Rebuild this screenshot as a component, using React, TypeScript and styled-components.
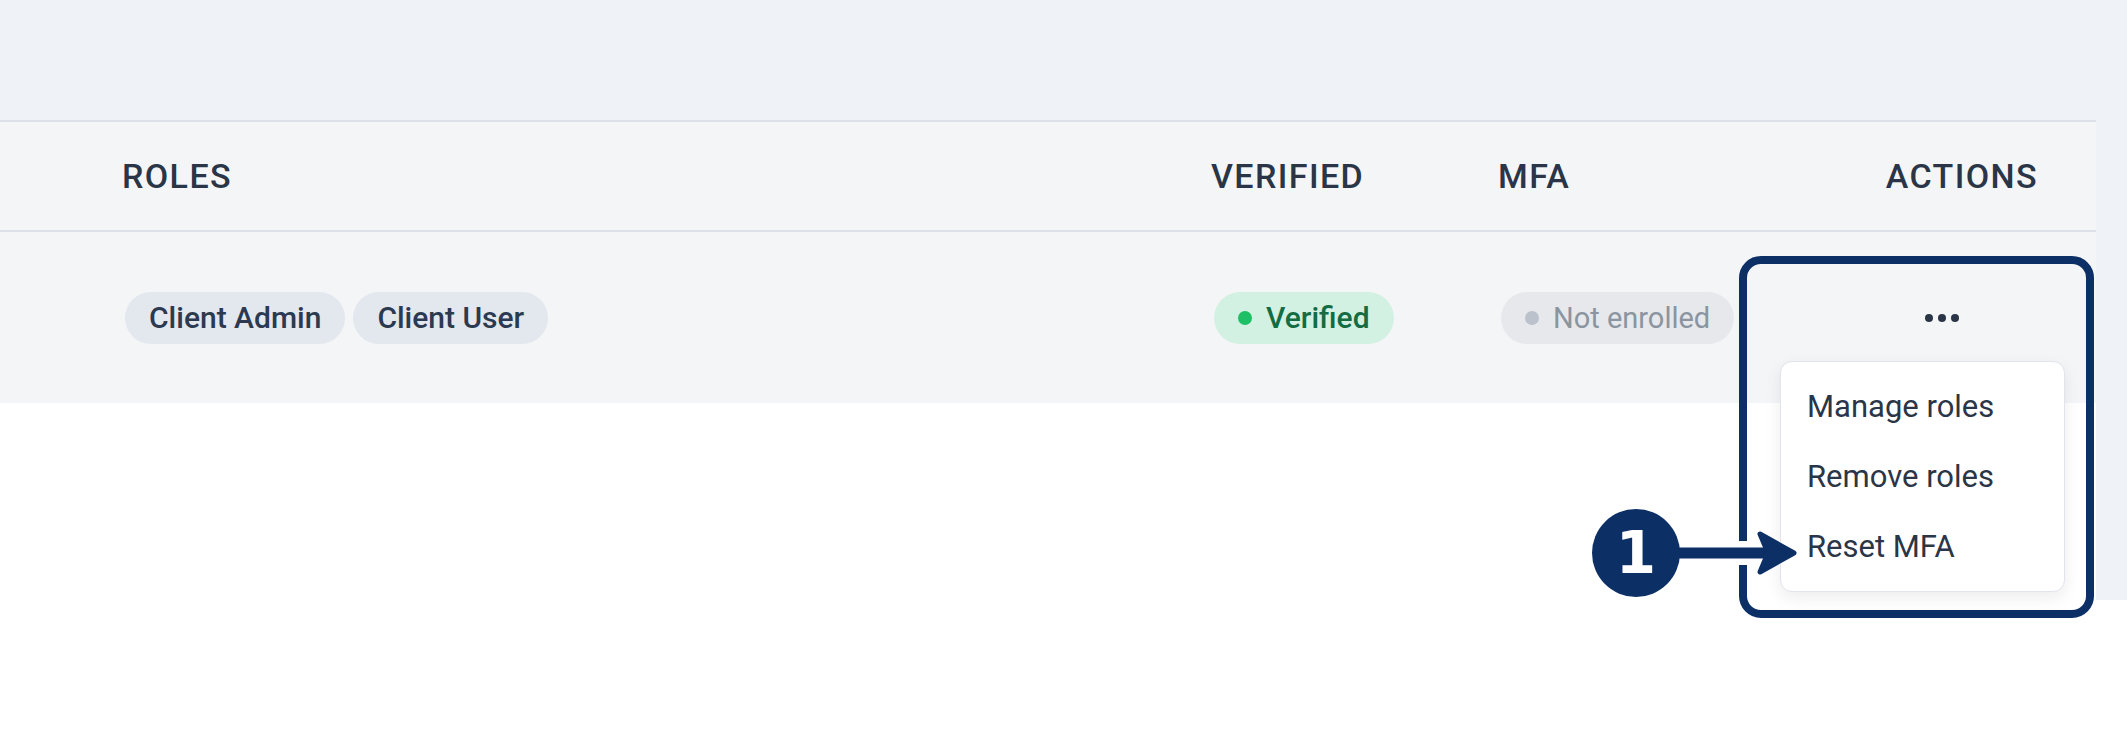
import styled, { createGlobalStyle } from 'styled-components';

const GlobalStyle = createGlobalStyle`
  html, body {
    margin: 0;
    padding: 0;
    background: #ffffff;
  }
  body {
    font-family: Roboto, "Noto Sans", "Liberation Sans", sans-serif;
    color: #2a3547;
  }
  * {
    box-sizing: border-box;
  }
`;

const NAVY = '#0c2f66';

const Page = styled.div`
  position: relative;
  width: 2127px;
  height: 739px;
  overflow: hidden;
  display: flex;
  align-items: flex-start;
  background: #ffffff;
`;

const MainColumn = styled.div`
  width: 2096px;
  display: flex;
  flex-direction: column;
`;

const TopBand = styled.div`
  height: 120px;
  background: #eff2f6;
`;

const SideStrip = styled.div`
  flex: 1;
  height: 600px;
  background: #eff2f6;
`;

const Table = styled.div`
  border-top: 2px solid #dde1e7;
  background: #ffffff;
`;

const Row = styled.div<{ $height: number; $divider?: boolean }>`
  display: grid;
  grid-template-columns: 1089px 287px 242px 356px;
  align-items: center;
  padding-left: 122px;
  height: ${(p) => p.$height}px;
  background: #f4f5f7;
  border-bottom: ${(p) => (p.$divider ? '2px solid #dde1e7' : 'none')};
`;

const HeadCell = styled.div<{ $right?: boolean }>`
  font-size: 34px;
  font-weight: 500;
  letter-spacing: 1.4px;
  color: #2a3547;
  text-transform: uppercase;
  text-align: ${(p) => (p.$right ? 'right' : 'left')};
  padding-right: ${(p) => (p.$right ? '58px' : '0')};
`;

const Cell = styled.div`
  display: flex;
  align-items: center;
  gap: 8px;
  padding-left: 3px;
`;

const ActionCell = styled.div`
  display: flex;
  justify-content: flex-end;
  padding-right: 129px;
`;

const Pill = styled.span<{ $tone: 'role' | 'success' | 'muted' }>`
  display: inline-flex;
  align-items: center;
  gap: 14px;
  height: 52px;
  padding: 0 24px;
  border-radius: 26px;
  font-size: ${(p) => (p.$tone === 'muted' ? '29px' : '30px')};
  font-weight: ${(p) => (p.$tone === 'muted' ? 400 : 500)};
  white-space: nowrap;
  background: ${(p) =>
    p.$tone === 'success' ? '#d3f1e2' : p.$tone === 'muted' ? '#e6e8ec' : '#e3e7ee'};
  color: ${(p) =>
    p.$tone === 'success' ? '#146c43' : p.$tone === 'muted' ? '#8b94a1' : '#2b3a50'};
`;

const StatusDot = styled.span<{ $color: string }>`
  width: 14px;
  height: 14px;
  border-radius: 50%;
  background: ${(p) => p.$color};
`;

const DotsButton = styled.button`
  display: flex;
  gap: 5px;
  padding: 8px;
  border: none;
  background: transparent;
  cursor: pointer;
`;

const Dot = styled.span`
  width: 8px;
  height: 8px;
  border-radius: 50%;
  background: #2a3547;
`;

const Highlight = styled.div`
  position: absolute;
  left: 1739px;
  top: 256px;
  width: 355px;
  height: 362px;
  border: 8px solid ${NAVY};
  border-radius: 22px;
  pointer-events: none;
`;

const Menu = styled.ul`
  position: absolute;
  left: 1780px;
  top: 361px;
  width: 285px;
  height: 231px;
  margin: 0;
  padding: 10px 0;
  list-style: none;
  background: #ffffff;
  border: 1.5px solid #e1e4ea;
  border-radius: 12px;
  box-shadow: 0 6px 16px rgba(20, 30, 50, 0.08);
`;

const MenuItem = styled.li`
  height: 70px;
  line-height: 70px;
  padding-left: 26px;
  font-size: 31px;
  color: #2a3547;
  white-space: nowrap;
`;

const Badge = styled.div`
  position: absolute;
  left: 1592px;
  top: 509px;
  width: 88px;
  height: 88px;
  border-radius: 50%;
  background: ${NAVY};
  display: flex;
  align-items: center;
  justify-content: center;
  color: #ffffff;
  font-family: "DejaVu Sans", sans-serif;
  font-weight: 700;
  font-size: 58px;
  line-height: 1;
`;

const Arrow = styled.svg`
  position: absolute;
  left: 1676px;
  top: 526px;
`;

function StepArrow() {
  return (
    <Arrow width="126" height="54" viewBox="0 0 126 54">
      <line x1="24" y1="27" x2="86" y2="27" stroke="#ffffff" strokeWidth="24" />
      <line x1="2" y1="27" x2="92" y2="27" stroke={NAVY} strokeWidth="11" />
      <path
        d="M84 8 L118 27 L84 46 L92 27 Z"
        fill={NAVY}
        stroke={NAVY}
        strokeWidth="5"
        strokeLinejoin="round"
      />
    </Arrow>
  );
}

export default function App() {
  return (
    <>
      <GlobalStyle />
      <Page>
        <MainColumn>
          <TopBand />
          <Table>
            <Row $height={110} $divider>
              <HeadCell>Roles</HeadCell>
              <HeadCell>Verified</HeadCell>
              <HeadCell>MFA</HeadCell>
              <HeadCell $right>Actions</HeadCell>
            </Row>
            <Row $height={171}>
              <Cell>
                <Pill $tone="role">Client Admin</Pill>
                <Pill $tone="role">Client User</Pill>
              </Cell>
              <Cell>
                <Pill $tone="success">
                  <StatusDot $color="#1fbf66" />
                  Verified
                </Pill>
              </Cell>
              <Cell>
                <Pill $tone="muted">
                  <StatusDot $color="#bcc2cb" />
                  Not enrolled
                </Pill>
              </Cell>
              <ActionCell>
                <DotsButton aria-label="Row actions">
                  <Dot />
                  <Dot />
                  <Dot />
                </DotsButton>
              </ActionCell>
            </Row>
          </Table>
        </MainColumn>
        <SideStrip />

        <Menu>
          <MenuItem>Manage roles</MenuItem>
          <MenuItem>Remove roles</MenuItem>
          <MenuItem>Reset MFA</MenuItem>
        </Menu>
        <Highlight />
        <StepArrow />
        <Badge>1</Badge>
      </Page>
    </>
  );
}
